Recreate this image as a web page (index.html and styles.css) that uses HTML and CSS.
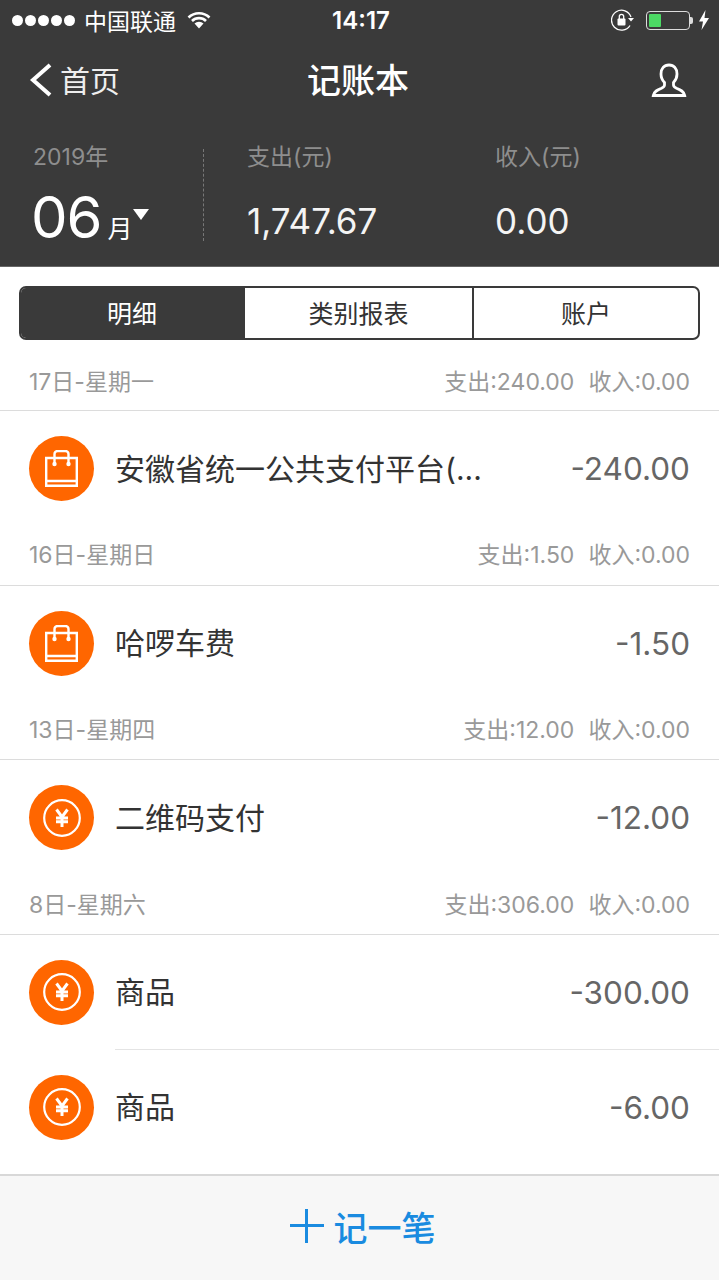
FILE: index.html
```html
<!DOCTYPE html>
<html lang="zh-CN">
<head>
  <meta charset="UTF-8" />
  <meta name="viewport" content="width=device-width, initial-scale=1.0" />
  <title>记账本</title>
  <link rel="stylesheet" href="styles.css">
</head>
<body>

  <svg class="sprites" width="0" height="0">
    <symbol id="icon-bag" viewBox="0 0 33 37">
      <path d="M1.200 8h30.600v27.800H1.200zM1.200 31h30.600M9.500 14V4a3 3 0 0 1 3-3h8a3 3 0 0 1 3 3v10" fill="none" stroke="#fff" stroke-width="2.400"/>
      <circle cx="9.500" cy="14" r="2.200" fill="#fff"/>
      <circle cx="23.500" cy="14" r="2.200" fill="#fff"/>
    </symbol>
    <symbol id="icon-yuan" viewBox="0 0 38 38">
      <circle cx="19" cy="19" r="17.800" fill="none" stroke="#fff" stroke-width="2.200"/>
      <path d="M13.500 10.500l5.500 7.500 5.500-7.500M13 19h12M13 22.800h12M19 18v10" fill="none" stroke="#fff" stroke-width="3"/>
    </symbol>
  </svg>

  <div class="app">
    <header class="top">
      <div class="status">
        <div class="status-left">
          <span class="signal"><i></i><i></i><i></i><i></i><i></i></span>
          <span>中国联通</span>
          <svg class="wifi" width="24" height="18" viewBox="0 0 24 18">
            <path d="M1.500 6.500a15 15 0 0 1 21 0M5 10a10 10 0 0 1 14 0" fill="none" stroke="#fff" stroke-width="2.600"/>
            <path d="M7.500 12.600a6.500 6.500 0 0 1 9 0L12 17.500z" fill="#fff"/>
          </svg>
        </div>
        <div class="status-time">14:17</div>
        <div class="status-right">
          <svg width="24" height="22" viewBox="0 0 24 22">
            <path d="M19 16.500A10 10 0 1 1 20 8" fill="none" stroke="#fff" stroke-width="1.300"/>
            <path d="M17 9h6l-3 3.500z" fill="#fff"/>
            <rect x="6.500" y="9.500" width="8" height="7" rx="1" fill="#fff"/>
            <path d="M8.300 10V7.500a2.200 2.200 0 0 1 4.400 0V10" fill="none" stroke="#fff" stroke-width="1.300"/>
          </svg>
          <div class="battery"><div class="battery-level"></div></div>
          <div class="battery-cap"></div>
          <svg width="12" height="20" viewBox="0 0 12 20">
            <path d="M7.500 0L1 11.500h4L3.500 20 11 8H6.500z" fill="#fff"/>
          </svg>
        </div>
      </div>

      <nav class="nav">
        <a class="nav-back">
          <svg width="24" height="34" viewBox="0 0 24 34">
            <path d="M21 2L4 17l17 15" fill="none" stroke="#fff" stroke-width="4"/>
          </svg>
          <span>首页</span>
        </a>
        <div class="nav-title">记账本</div>
        <svg class="nav-user" width="36" height="34" viewBox="0 0 36 34">
          <path d="M18 2c-5 0-8 3.600-8 9 0 3.500 1.500 6.500 3.500 8.500v2.500c0 1.500-1 2.300-3 3.200-4 1.600-7.500 3-8.200 7.300h31.400c-.7-4.300-4.200-5.700-8.200-7.300-2-.9-3-1.700-3-3.200v-2.500c2-2 3.500-5 3.500-8.500 0-5.400-3-9-8-9z" fill="none" stroke="#fff" stroke-width="2.800"/>
        </svg>
      </nav>

      <div class="summary">
        <div class="summary-date">
          <div class="summary-label">2019年</div>
          <div class="month">
            <span class="month-num">06</span>
            <span class="month-unit">月</span>
            <span class="month-arrow"></span>
          </div>
        </div>
        <div class="summary-sep"></div>
        <div class="summary-col">
          <div class="summary-label">支出(元)</div>
          <div class="summary-value">1,747.67</div>
        </div>
        <div class="summary-col">
          <div class="summary-label">收入(元)</div>
          <div class="summary-value">0.00</div>
        </div>
      </div>
    </header>

    <div class="tabs">
      <div class="tab tab-active">明细</div>
      <div class="tab">类别报表</div>
      <div class="tab">账户</div>
    </div>

    <main class="list">
      <div class="day day-first">
        <span>17日-星期一</span>
        <span class="day-sum"><span>支出:240.00</span><span>收入:0.00</span></span>
      </div>
      <div class="row">
        <div class="row-icon"><svg class="bag"><use href="#icon-bag"/></svg></div>
        <div class="row-name">安徽省统一公共支付平台(...</div>
        <div class="row-amount">-240.00</div>
      </div>

      <div class="day">
        <span>16日-星期日</span>
        <span class="day-sum"><span>支出:1.50</span><span>收入:0.00</span></span>
      </div>
      <div class="row">
        <div class="row-icon"><svg class="bag"><use href="#icon-bag"/></svg></div>
        <div class="row-name">哈啰车费</div>
        <div class="row-amount">-1.50</div>
      </div>

      <div class="day">
        <span>13日-星期四</span>
        <span class="day-sum"><span>支出:12.00</span><span>收入:0.00</span></span>
      </div>
      <div class="row">
        <div class="row-icon"><svg class="yuan"><use href="#icon-yuan"/></svg></div>
        <div class="row-name">二维码支付</div>
        <div class="row-amount">-12.00</div>
      </div>

      <div class="day">
        <span>8日-星期六</span>
        <span class="day-sum"><span>支出:306.00</span><span>收入:0.00</span></span>
      </div>
      <div class="row row-split">
        <div class="row-icon"><svg class="yuan"><use href="#icon-yuan"/></svg></div>
        <div class="row-name">商品</div>
        <div class="row-amount">-300.00</div>
      </div>
      <div class="row">
        <div class="row-icon"><svg class="yuan"><use href="#icon-yuan"/></svg></div>
        <div class="row-name">商品</div>
        <div class="row-amount">-6.00</div>
      </div>
    </main>

    <footer class="add">
      <span class="add-plus"></span>
      <span>记一笔</span>
    </footer>
  </div>

</body>
</html>
```
FILE: styles.css
```css
:root { --dark: #3a3a3a; --orange: #ff6600; --line: #dcdcdc; --grey: #999; }
* { box-sizing: border-box; font-family: 'Inter', 'Noto Sans CJK SC', sans-serif; }
html, body { margin: 0; padding: 0; background: white; }
.sprites { display: block; height: 0; }
.app { width: 719px; height: 1280px; display: flex; flex-direction: column; overflow: hidden; }

.top { height: 267px; background: var(--dark); color: white; border-bottom: 1px solid #666; flex: none; }
.status { height: 40px; display: grid; grid-template-columns: 1fr auto 1fr; align-items: center; padding: 0 9px 0 12px; font-size: 23px; }
.status-left { display: flex; align-items: center; gap: 9px; }
.signal { display: flex; gap: 2px; }
.signal i { width: 11px; height: 11px; background: white; border-radius: 50%; }
.wifi { margin-left: 2px; }
.status-time { font-weight: 600; font-size: 24px; }
.status-right { display: flex; align-items: center; justify-content: flex-end; }
.battery { width: 44px; height: 19px; margin-left: 11px; padding: 2px; border: 1px solid #ddd; border-radius: 4px; }
.battery-level { width: 12px; height: 100%; background: #4cd964; border-radius: 1px; }
.battery-cap { width: 3px; height: 7px; margin-right: 5px; background: #ddd; border-radius: 0 2px 2px 0; }

.nav { height: 80px; padding: 0 32px 0 29px; display: grid; grid-template-columns: 1fr auto 1fr; align-items: center; }
.nav-back { display: flex; align-items: center; gap: 7px; font-size: 30px; color: #eee; padding-bottom: 3px; }
.nav-back svg { margin-top: 3px; }
.nav-title { font-size: 34px; font-weight: 500; padding-bottom: 4px; }
.nav-user { justify-self: end; }

.summary { display: flex; padding-top: 22px; }
.summary-date { width: 203px; padding-left: 33px; }
.summary-sep { width: 1px; height: 92px; margin-top: 7px; border-left: 1px dashed #777; }
.summary-label { font-size: 23px; line-height: 30px; color: #8e8e8e; }
.month { display: flex; align-items: baseline; margin-top: 13px; margin-left: -2px; }
.month-num { font-size: 58px; line-height: 64px; font-weight: 400; letter-spacing: -1px; }
.month-unit { font-size: 25px; margin-left: 6px; }
.month-arrow { width: 0; height: 0; align-self: center; margin-top: -5px; border: 8px solid transparent; border-top: 11px solid white; border-bottom: 0; }
.summary-col { width: 248px; padding-left: 43px; }
.summary-value { font-size: 35px; font-weight: 400; line-height: 44px; margin-top: 27px; color: #f4f4f4; }

.tabs { height: 54px; margin: 19px 19px 0 19px; display: flex; border: 2px solid var(--dark); border-radius: 7px; overflow: hidden; flex: none; }
.tab { flex: 1; display: flex; align-items: center; justify-content: center; font-size: 25px; color: #333; padding-bottom: 3px; }
.tab + .tab { border-left: 2px solid var(--dark); }
.tab-active { flex: none; width: 222px; background: var(--dark); color: white; }
.tab:last-child { flex: none; width: 226px; }

.list { flex: 1; }
.day { height: 59.67px; padding: 0 29px 4px 29px; display: flex; justify-content: space-between; align-items: center; font-size: 23px; color: var(--grey); border-bottom: 1px solid var(--line); }
.day-first { height: 71px; padding-top: 14px; }
.day-sum { display: flex; gap: 14px; }
.row { height: 115px; display: flex; align-items: center; padding: 0 29px; position: relative; }
.row-split::after { content: ""; position: absolute; left: 115px; right: 0; bottom: 0; height: 1px; background: #e4e4e4; }
.row-icon { width: 65px; height: 65px; flex: none; background: var(--orange); border-radius: 50%; display: flex; align-items: center; justify-content: center; }
.bag { width: 33px; height: 37px; }
.yuan { width: 38px; height: 38px; }
.row-name { flex: 1; margin-left: 21px; font-size: 30px; color: #333; padding-bottom: 4px; }
.row-amount { font-size: 31.500px; font-weight: 400; color: #666; }

.add { height: 106px; flex: none; display: flex; align-items: center; justify-content: center; gap: 10px; padding: 0 0 4px 6px; background: #f7f7f7; border-top: 2px solid #d8d8d8; color: #1a8be0; font-size: 34px; font-weight: 500; }
.add-plus { width: 34px; height: 34px; position: relative; }
.add-plus::before, .add-plus::after { content: ""; position: absolute; background: #1a8be0; }
.add-plus::before { left: 0; right: 0; top: 15px; height: 3px; }
.add-plus::after { top: 0; bottom: 0; left: 15px; width: 3px; }
```
